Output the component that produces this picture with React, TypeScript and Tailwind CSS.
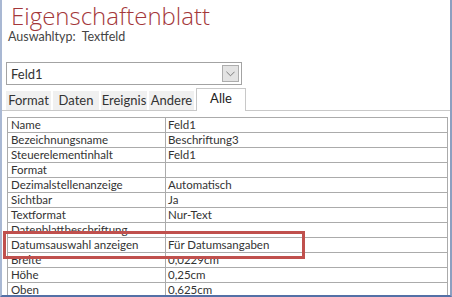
import React from "react";

const rows: [string, string][] = [
  ["Name", "Feld1"],
  ["Bezeichnungsname", "Beschriftung3"],
  ["Steuerelementinhalt", "Feld1"],
  ["Format", ""],
  ["Dezimalstellenanzeige", "Automatisch"],
  ["Sichtbar", "Ja"],
  ["Textformat", "Nur-Text"],
  ["Datenblattbeschriftung", ""],
  ["Datumsauswahl anzeigen", "Für Datumsangaben"],
  ["Breite", "0,0229cm"],
  ["Höhe", "0,25cm"],
  ["Oben", "0,625cm"],
];

const tabs = [
  { label: "Format", w: "w-[45px]" },
  { label: "Daten", w: "w-[46px]" },
  { label: "Ereignis", w: "w-[46px]" },
  { label: "Andere", w: "w-[45px]" },
];

export default function App() {
  return (
    <div className="relative w-[452px] h-[297px] overflow-hidden bg-white border-l-2 border-r-2 border-b-2 border-l-[#a9b8d3] border-r-[#8d9fc0] border-b-[#5470a6] font-['Lato',sans-serif] text-[#333]">
      {/* Kopf */}
      <div className="pl-[9px] pt-[2px] h-[30px] text-[24px] leading-[27px] font-light text-[#a4373a] font-['Open_Sans',sans-serif]">
        Eigenschaftenblatt
      </div>
      <div className="pl-[6px] h-[14px] text-[12.5px] leading-[14px] text-[#444]">
        Auswahltyp:&nbsp;&nbsp;Textfeld
      </div>

      {/* Auswahlfeld */}
      <div className="ml-[4px] mt-[18px] w-[236px] h-[23px] flex items-center border border-[#a3a3a3] bg-white">
        <span className="pl-[4px] flex-1 text-[13px] leading-[16px]">Feld1</span>
        <div className="mr-[2px] w-[17px] h-[17px] flex items-center justify-center bg-[#e3e3e3] border border-[#adadad]">
          <svg viewBox="0 0 10 6" className="w-[9px] h-[6px]" fill="none" stroke="#707070" strokeWidth="1">
            <path d="M0.5 0.5 L5 5 L9.5 0.5" />
          </svg>
        </div>
      </div>

      {/* Registerkarten */}
      <div className="mt-[3px] flex items-end h-[23px] border-b border-[#c8c8c8]">
        <div className="w-[4px]" />
        {tabs.map((t) => (
          <div
            key={t.label}
            className={`${t.w} mr-[2px] h-[19px] bg-[#f0f0f0] text-[13px] leading-[19px] text-center text-[#333]`}
          >
            {t.label}
          </div>
        ))}
        <div className="w-[50px] h-[23px] -mb-px bg-white border border-b-0 border-[#c8c8c8] text-[13px] leading-[18px] text-center text-[#222]">
          Alle
        </div>
      </div>

      {/* Eigenschaften */}
      <div className="ml-[5px] mt-[6px] w-[441px] border-l border-r border-t border-[#ababab]">
        {rows.map(([k, v]) => (
          <div key={k} className="flex h-[15px] border-b border-[#ababab]">
            <div className="w-[158px] shrink-0 border-r border-[#ababab] pl-[3px] text-[11.5px] leading-[14px] whitespace-nowrap overflow-hidden">
              {k}
            </div>
            <div className="flex-1 pl-[2px] text-[11.5px] leading-[14px] whitespace-nowrap overflow-hidden">
              {v}
            </div>
          </div>
        ))}
      </div>

      {/* Markierung */}
      <div className="absolute left-[1px] top-[231px] w-[302px] h-[28px] border-[3px] border-[#c0504d]" />
    </div>
  );
}
